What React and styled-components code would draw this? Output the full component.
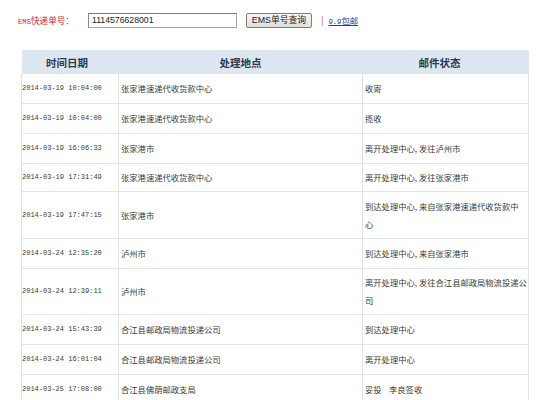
import React from "react";
import styled, { createGlobalStyle } from "styled-components";

const Global = createGlobalStyle`
  html, body { margin: 0; padding: 0; background: #fff; }
  body { font-family: "Noto Sans CJK SC", "Liberation Sans", sans-serif; color: #333; }
`;

const Page = styled.div`
  width: 545px;
  height: 400px;
  overflow: hidden;
  padding: 12px 0 0 18px;
  box-sizing: border-box;
`;

const TopBar = styled.div`
  display: flex;
  align-items: center;
  height: 16px;
`;

const Label = styled.span`
  font-size: 8.6px;
  color: #cc2b2b;
  width: 70px;
  white-space: nowrap;
`;

const Mono = styled.span`
  font-family: "Liberation Mono", monospace;
  font-size: ${(p) => p.$size || 7}px;
`;

const Input = styled.div`
  width: 149px;
  height: 15px;
  box-sizing: border-box;
  border: 1px solid #a5a5a5;
  border-top-color: #7a7a7a;
  border-left-color: #8a8a8a;
  font-family: "Liberation Sans", Arial, sans-serif;
  font-size: 8.7px;
  line-height: 13px;
  padding-left: 3px;
  color: #222;
`;

const Button = styled.div`
  margin-left: 9px;
  width: 66px;
  height: 15px;
  box-sizing: border-box;
  border: 1px solid #7d7d7d;
  border-radius: 2px;
  background: linear-gradient(#f6f6f6, #dedede);
  font-family: "Liberation Sans", "Noto Sans CJK SC", sans-serif;
  font-size: 8.8px;
  line-height: 13px;
  text-align: center;
  color: #222;
  white-space: nowrap;
`;

const Sep = styled.span`
  color: #d04040;
  font-size: 9px;
  margin-left: 9px;
`;

const Link = styled.a`
  margin-left: 5px;
  font-size: 8.4px;
  color: #1a3fa8;
  text-decoration: underline;
  white-space: nowrap;
`;

const Table = styled.table`
  margin: 22px 0 0 3px;
  width: 507px;
  table-layout: fixed;
  border-collapse: collapse;
`;

const Head = styled.th`
  background: #dce6f1;
  height: 24px;
  padding: 0 ${(p) => p.$pr || 0}px 0 0;
  font-size: 10.5px;
  font-weight: bold;
  color: #2f3a4c;
  text-align: center;
`;

const Row = styled.tr`
  border-bottom: 1px solid #e4e4e4;
`;

const Cell = styled.td`
  border-left: 1px solid #e2e2e2;
  border-right: 1px solid #e2e2e2;
  padding: 0 0 0 ${(p) => (p.$mono ? 0 : 2)}px;
  height: ${(p) => p.$h}px;
  box-sizing: border-box;
  font-family: ${(p) =>
    p.$mono ? `"Liberation Mono", monospace` : `"Noto Sans CJK SC", sans-serif`};
  font-size: ${(p) => (p.$mono ? 7 : 8.3)}px;
  line-height: 18px;
  color: #3a3a3a;
  vertical-align: middle;
  white-space: nowrap;
  overflow: hidden;
`;

const Line = styled.span`
  display: block;
`;

const rows = [
  ["2014-03-19 10:04:00", "张家港速递代收货款中心", ["收寄"], 29],
  ["2014-03-19 10:04:00", "张家港速递代收货款中心", ["揽收"], 30],
  ["2014-03-19 16:06:33", "张家港市", ["离开处理中心, 发往泸州市"], 30],
  ["2014-03-19 17:31:49", "张家港速递代收货款中心", ["离开处理中心, 发往张家港市"], 28],
  ["2014-03-19 17:47:15", "张家港市", ["到达处理中心, 来自张家港速递代收货款中", "心"], 47],
  ["2014-03-24 12:35:20", "泸州市", ["到达处理中心, 来自张家港市"], 30],
  ["2014-03-24 12:39:11", "泸州市", ["离开处理中心, 发往合江县邮政局物流投递公", "司"], 46],
  ["2014-03-24 15:43:39", "合江县邮政局物流投递公司", ["到达处理中心"], 30],
  ["2014-03-24 16:01:04", "合江县邮政局物流投递公司", ["离开处理中心"], 30],
  ["2014-03-25 17:08:00", "合江县佛荫邮政支局", ["妥投\u00a0\u00a0\u00a0\u00a0李良签收"], 29],
];

export default function App() {
  return (
    <Page>
      <Global />
      <TopBar>
        <Label>
          <Mono $size={7.2}>EMS</Mono>快递单号：
        </Label>
        <Input>1114576628001</Input>
        <Button>EMS单号查询</Button>
        <Sep>|</Sep>
        <Link>
          <Mono $size={7.2}>9.9</Mono>包邮
        </Link>
      </TopBar>
      <Table>
        <colgroup>
          <col style={{ width: 97 }} />
          <col style={{ width: 244 }} />
          <col style={{ width: 166 }} />
        </colgroup>
        <thead>
          <tr>
            <Head $pr={6}>时间日期</Head>
            <Head>处理地点</Head>
            <Head $pr={12}>邮件状态</Head>
          </tr>
        </thead>
        <tbody>
          {rows.map(([t, p, s, h], i) => (
            <Row key={i}>
              <Cell $mono $h={h}>{t}</Cell>
              <Cell $h={h}>{p}</Cell>
              <Cell $h={h}>
                {s.map((l, j) => (
                  <Line key={j}>{l}</Line>
                ))}
              </Cell>
            </Row>
          ))}
        </tbody>
      </Table>
    </Page>
  );
}
